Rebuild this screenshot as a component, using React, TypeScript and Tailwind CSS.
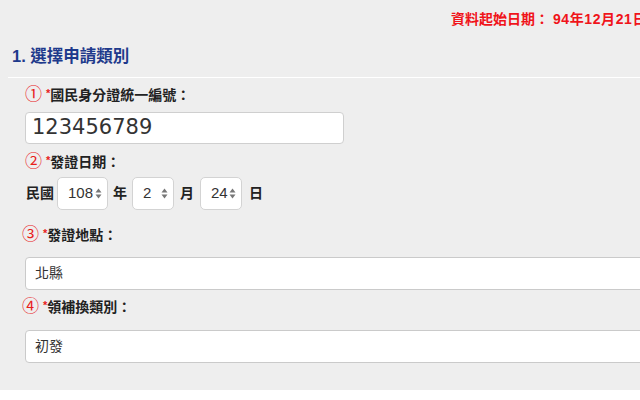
import { ReactNode } from 'react';

const cjk = 'font-["Liberation_Sans","Noto_Sans_CJK_TC",sans-serif]';

const Spinner = () => (
  <svg width="7" height="11" viewBox="0 0 7 11" className="shrink-0">
    <path d="M3.5 0.5 L6.5 4.5 L0.5 4.5 Z" fill="#777" />
    <path d="M3.5 10.5 L6.5 6.5 L0.5 6.5 Z" fill="#777" />
  </svg>
);

type FieldLabelProps = { num: string; children: ReactNode; className?: string };
const FieldLabel = ({ num, children, className = '' }: FieldLabelProps) => (
  <div className={'flex h-[20px] items-center text-[14px] leading-[20px] font-bold text-[#222] ' + className}>
    <span className="text-[17px] font-normal text-[#e8201a]">{num}</span>
    <span className="ml-[4px] self-start text-[11px] leading-[16px] text-[#e8201a]">*</span>
    <span>{children}</span>
  </div>
);

const DateSelect = ({ value, width }: { value: string; width: string }) => (
  <div
    className={
      'flex h-[33px] items-center justify-between rounded-[5px] border border-[#d3d3d3] bg-white pl-[10px] pr-[5px] text-[15px] font-normal text-[#333] ' +
      width
    }
  >
    <span className='font-["Liberation_Sans",sans-serif]'>{value}</span>
    <Spinner />
  </div>
);

const WideInput = ({ value }: { value: string }) => (
  <div className="ml-[25px] flex h-[33px] w-[700px] items-center rounded-[4px] border border-[#cacaca] bg-white pl-[9px] text-[14px] text-[#333]">
    {value}
  </div>
);

export default function App() {
  return (
    <div className={'h-[400px] w-[640px] overflow-hidden bg-white ' + cjk}>
      <div className="h-[390px] bg-[#eeeeee]">
        <div className="whitespace-nowrap pl-[451px] pt-[11px] text-[14px] leading-[16px] font-bold text-[#f0141a]">
          資料起始日期：&nbsp;<span className="tracking-[0.6px]">94年12月21日</span>
        </div>

        <div className="ml-[8px] mt-[19px] border-b border-white pb-[11px] pl-[4px] text-[16.5px] leading-[20px] font-bold text-[#1e3a8c]">
          1. 選擇申請類別
        </div>

        <FieldLabel num="①" className="ml-[25px] mt-[7px]">
          國民身分證統一編號：
        </FieldLabel>
        <div className="ml-[25px] mt-[7px] flex h-[32px] w-[319px] items-center rounded-[4px] border border-[#cfcfcf] bg-white pl-[6px] font-['DejaVu_Sans',sans-serif] text-[21px] text-[#333]">
          123456789
        </div>

        <FieldLabel num="②" className="ml-[25px] mt-[8px]">
          發證日期：
        </FieldLabel>
        <div className="ml-[26px] mt-[5px] flex items-center text-[14px] font-bold text-[#222]">
          <span>民國</span>
          <div className="ml-[3px]">
            <DateSelect value="108" width="w-[51px]" />
          </div>
          <span className="mx-[5px]">年</span>
          <DateSelect value="2" width="w-[42px]" />
          <span className="mx-[6px]">月</span>
          <DateSelect value="24" width="w-[42px]" />
          <span className="ml-[7px]">日</span>
        </div>

        <FieldLabel num="③" className="ml-[22px] mt-[15px]">
          發證地點：
        </FieldLabel>
        <div className="mt-[12px]">
          <WideInput value="北縣" />
        </div>

        <FieldLabel num="④" className="ml-[22px] mt-[7px]">
          領補換類別：
        </FieldLabel>
        <div className="mt-[13px]">
          <WideInput value="初發" />
        </div>
      </div>
    </div>
  );
}
